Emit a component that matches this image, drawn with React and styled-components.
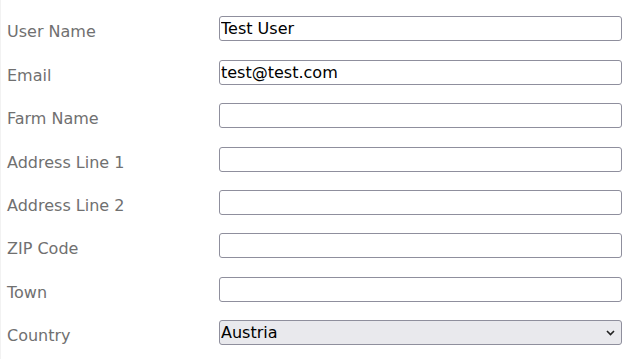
import React from "react";
import styled, { createGlobalStyle } from "styled-components";

const Global = createGlobalStyle`
  html, body { margin: 0; padding: 0; background: #fff; }
  body { font-family: "DejaVu Sans", sans-serif; }
`;

const Form = styled.form`
  display: grid;
  grid-template-columns: 212px 403px;
  grid-auto-rows: 43.45px;
  padding: 7px 0 0 6px;
  border-left: 1px solid #f2f2f2;
  margin: 0;
  box-sizing: border-box;
  height: 359px;
`;

const Label = styled.label`
  font-size: 16px;
  color: #707070;
  align-self: center;
  padding-top: 6px;
`;

const fieldBase = `
  box-sizing: border-box;
  width: 403px;
  height: 25px;
  font-family: "DejaVu Sans", sans-serif;
  font-size: 16px;
  color: #000;
  border: 1px solid #8f8f9d;
  border-radius: 3px;
  padding: 0 1px;
  margin: 0;
  align-self: center;
  outline: none;
`;

const Input = styled.input`
  ${fieldBase}
  background: #fff;
`;

const SelectWrap = styled.div`
  position: relative;
  align-self: center;
  width: 403px;
  height: 25px;
`;

const Select = styled.select`
  ${fieldBase}
  background: #e9e9ed;
  appearance: none;
  -webkit-appearance: none;
  display: block;
`;

const Chevron = styled.svg`
  position: absolute;
  right: 7px;
  top: 10px;
  pointer-events: none;
`;

const fields = [
  ["User Name", "Test User"],
  ["Email", "test@test.com"],
  ["Farm Name", ""],
  ["Address Line 1", ""],
  ["Address Line 2", ""],
  ["ZIP Code", ""],
  ["Town", ""],
];

export default function App() {
  return (
    <>
      <Global />
      <Form>
        {fields.map(([label, value]) => (
          <React.Fragment key={label}>
            <Label>{label}</Label>
            <Input defaultValue={value} />
          </React.Fragment>
        ))}
        <Label>Country</Label>
        <SelectWrap>
          <Select defaultValue="Austria">
            <option>Austria</option>
            <option>Germany</option>
            <option>Switzerland</option>
          </Select>
          <Chevron width="9" height="6" viewBox="0 0 9 6">
            <path d="M1 1 L4.5 4.5 L8 1" stroke="#222" strokeWidth="1.6" fill="none" />
          </Chevron>
        </SelectWrap>
      </Form>
    </>
  );
}
